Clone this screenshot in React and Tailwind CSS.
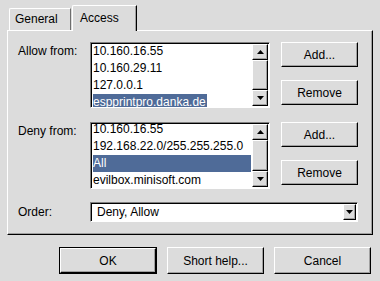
import React from 'react';

const raised =
  'border border-t-white border-l-white border-r-black border-b-black bg-[#dcdcdc] shadow-[inset_-1px_-1px_0_#a0a0a0]';
const sunken =
  'border border-t-[#808080] border-l-[#808080] border-r-white border-b-white shadow-[inset_1px_1px_0_#000]';

function Arrow({ up }) {
  return (
    <svg width="7" height="4" viewBox="0 0 7 4">
      <path d={up ? 'M3.5 0L7 4H0z' : 'M0 0h7L3.5 4z'} fill="#000" />
    </svg>
  );
}

function ScrollBar() {
  return (
    <div className="flex h-full w-[16px] flex-col">
      <div className={`flex h-[16px] items-center justify-center ${raised}`}>
        <Arrow up />
      </div>
      <div className={`flex-1 ${raised}`} />
      <div className={`flex h-[16px] items-center justify-center ${raised}`}>
        <Arrow />
      </div>
    </div>
  );
}

function ListBox({ items, selected, fullRow, height, offset = '' }) {
  return (
    <div className={`flex w-[180px] bg-white ${sunken}`} style={{ height }}>
      <div className="flex-1 overflow-hidden pl-[2px]">
        <div className={offset}>
          {items.map((item, i) => (
            <div key={item} className="h-[17px] whitespace-nowrap leading-[17px]">
              {i === selected ? (
                <span
                  className={`bg-[#4f6b98] pr-px text-white ${fullRow ? 'block w-[158px]' : 'inline-block'}`}
                >
                  {item}
                </span>
              ) : (
                item
              )}
            </div>
          ))}
        </div>
      </div>
      <div className="pr-px pt-px pb-px">
        <ScrollBar />
      </div>
    </div>
  );
}

function Button({ children, className = '' }) {
  return (
    <div className={`flex items-center justify-center ${raised} ${className}`}>{children}</div>
  );
}

function SideButtons() {
  return (
    <div className="ml-[11px] flex w-[77px] flex-col gap-[13px]">
      <Button className="h-[25px]">Add...</Button>
      <Button className="h-[25px]">Remove</Button>
    </div>
  );
}

export default function App() {
  return (
    <div className="h-[281px] w-[380px] bg-[#dcdcdc] px-[7px] pt-[5px] font-['Liberation_Sans',Arial,sans-serif] text-[12px] text-black">
      {/* tabs */}
      <div className="flex h-[25px] items-end pl-[2px]">
        <div className="h-[22px] w-[62px] rounded-tl-[2px] border-t border-l border-r border-t-white border-l-white border-r-[#6e6e6e] pl-[5px] leading-[20px]">
          General
        </div>
        <div className="relative z-10 -mb-px ml-px h-[26px] w-[65px] rounded-tl-[2px] border-t border-l border-r border-t-white border-l-white border-r-black bg-[#dcdcdc] pl-[7px] leading-[24px] shadow-[inset_-1px_0_0_#a0a0a0]">
          Access
        </div>
      </div>

      {/* panel */}
      <div className="h-[205px] w-[366px] border border-t-white border-l-white border-r-black border-b-black shadow-[inset_-1px_-1px_0_#a0a0a0]">
        <div className="flex flex-col pl-[10px] pt-[11px]">
          <div className="flex h-[66px]">
            <div className="w-[72px] pt-px leading-[17px]">Allow from:</div>
            <ListBox
              items={['10.160.16.55', '10.160.29.11', '127.0.0.1', 'espprintpro.danka.de']}
              selected={3}
              height={66}
            />
            <SideButtons />
          </div>

          <div className="mt-[14px] flex h-[67px]">
            <div className="w-[72px] pt-px leading-[17px]">Deny from:</div>
            <ListBox
              items={['10.160.16.55', '192.168.22.0/255.255.255.0', 'All', 'evilbox.minisoft.com']}
              selected={2}
              fullRow
              height={67}
              offset="-mt-[2px]"
            />
            <SideButtons />
          </div>

          <div className="mt-[13px] flex h-[20px] items-center">
            <div className="w-[72px]">Order:</div>
            <div className={`flex h-[20px] w-[268px] items-center bg-white ${sunken}`}>
              <div className="flex-1 pl-[6px]">Deny, Allow</div>
              <div className="p-px">
                <div className={`flex h-[16px] w-[13px] items-center justify-center ${raised}`}>
                  <Arrow />
                </div>
              </div>
            </div>
          </div>
        </div>
      </div>

      {/* dialog buttons */}
      <div className="mt-[12px] flex justify-end gap-[10px] pr-[2px]">
        <div className="h-[27px] w-[98px] border border-black">
          <Button className="h-full">OK</Button>
        </div>
        <Button className="h-[27px] w-[97px]">Short help...</Button>
        <Button className="h-[27px] w-[97px]">Cancel</Button>
      </div>
    </div>
  );
}
